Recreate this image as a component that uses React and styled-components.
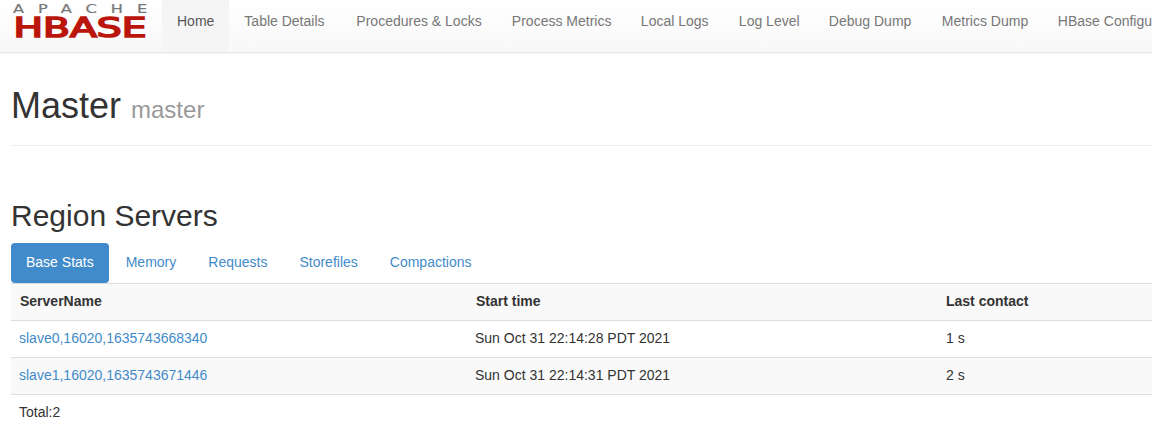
import React from "react";
import styled, { createGlobalStyle } from "styled-components";

const Global = createGlobalStyle`
  html, body { margin: 0; padding: 0; height: 446px; overflow: hidden; background: #fff; }
  body { font-family: "Liberation Sans", Arial, sans-serif; font-size: 14px; line-height: 20px; color: #333; }
`;
const Page = styled.div`width: 1152px; height: 446px; overflow: hidden;`;
const Navbar = styled.nav`
  display: flex; height: 53px; box-sizing: border-box; overflow: hidden; white-space: nowrap;
  background: linear-gradient(to bottom, #fff 0%, #f8f8f8 100%);
  border-bottom: 1px solid #e7e7e7;
  box-shadow: 0 1px 2px rgba(0,0,0,.05);
`;
const Brand = styled.div`width: 162px; flex: none; height: 52px; display: flex; align-items: flex-start;`;
const NavItem = styled.a`
  flex: none; padding: 11px 15px 0; height: 52px; box-sizing: border-box; color: ${p => p.$active ? "#555" : "#777"};
  width: ${p => p.$w ? `${p.$w}px` : "auto"};
  background: ${p => p.$active ? "#f5f5f5" : "transparent"};
`;
const Content = styled.main`padding: 0 0 0 11px;`;
const PageHeader = styled.header`
  padding: 33px 0 0; border-bottom: 1px solid #eee; height: 93px; box-sizing: border-box;
`;
const Title = styled.h1`margin: 0; font-size: 36px; line-height: 40px; font-weight: 500; color: #333;`;
const Small = styled.small`font-size: 24px; font-weight: 400; color: #999;`;
const Section = styled.h2`margin: 53px 0 0; font-size: 30px; line-height: 33px; font-weight: 500; color: #333;`;
const Tabs = styled.div`display: flex; margin-top: 11px; height: 40px;`;
const Tab = styled.a`
  padding: 9px 15px 0; margin-right: 2px; box-sizing: border-box; border-radius: 4px; height: 40px;
  color: ${p => p.$active ? "#fff" : "#428bca"};
  background: ${p => p.$active ? "#428bca" : "transparent"};
`;
const Table = styled.table`
  border-collapse: collapse; table-layout: fixed; width: 1152px; margin: 0; border-top: 1px solid #ddd;
`;
const Th = styled.th`
  text-align: left; font-weight: 700; color: #333; height: 37px; padding: 0 8px 3px 9px; box-sizing: border-box;
  background: #f9f9f9; border-bottom: 1px solid #ddd; width: ${p => p.$w}px;
`;
const Td = styled.td`
  height: 37px; padding: 0 8px 3px ${p => p.$pad || 8}px; box-sizing: border-box; border-bottom: 1px solid #ddd; color: #333;
  background: ${p => p.$striped ? "#f9f9f9" : "#fff"};
`;
const Link = styled.a`color: #428bca;`;
const Total = styled.div`padding: 7px 8px;`;

const Logo = () => (
  <svg width="162" height="52" viewBox="0 0 162 52" aria-label="Apache HBase">
    <g transform="scale(1.35 1)">
      <text x="9.6" y="13" fontFamily="DejaVu Sans, sans-serif" fontSize="12" fill="#777" stroke="#777" strokeWidth=".2" textLength="99.5" lengthAdjust="spacing">APACHE</text>
    </g>
    <text x="13.5" y="36.5" fontFamily="DejaVu Sans, sans-serif" fontSize="26" fill="#ba160c" stroke="#ba160c" strokeWidth="1.6" textLength="133" lengthAdjust="spacingAndGlyphs">HBASE</text>
  </svg>
);

const navs = [["Table Details", 112], ["Procedures & Locks", 155.5], ["Process Metrics", 129], ["Local Logs", 98], ["Log Level", 90], ["Debug Dump", 113], ["Metrics Dump", 116], ["HBase Configuration"]];
const tabs = ["Memory", "Requests", "Storefiles", "Compactions"];
const rows = [
  ["slave0,16020,1635743668340", "Sun Oct 31 22:14:28 PDT 2021", "1 s"],
  ["slave1,16020,1635743671446", "Sun Oct 31 22:14:31 PDT 2021", "2 s"],
];

export default function App() {
  return (
    <Page>
      <Global />
      <Navbar>
        <Brand><Logo /></Brand>
        <NavItem $active>Home</NavItem>
        {navs.map(([n, w]) => <NavItem key={n} $w={w}>{n}</NavItem>)}
      </Navbar>
      <Content>
        <PageHeader><Title>Master <Small>master</Small></Title></PageHeader>
        <Section>Region Servers</Section>
        <Tabs>
          <Tab $active>Base Stats</Tab>
          {tabs.map(t => <Tab key={t}>{t}</Tab>)}
        </Tabs>
        <Table>
          <thead>
            <tr><Th $w={456}>ServerName</Th><Th $w={470}>Start time</Th><Th>Last contact</Th></tr>
          </thead>
          <tbody>
            {rows.map((r, i) => (
              <tr key={r[0]}>
                <Td $striped={i === 1}><Link>{r[0]}</Link></Td>
                <Td $striped={i === 1}>{r[1]}</Td>
                <Td $striped={i === 1} $pad={9}>{r[2]}</Td>
              </tr>
            ))}
          </tbody>
        </Table>
        <Total>Total:2</Total>
      </Content>
    </Page>
  );
}
